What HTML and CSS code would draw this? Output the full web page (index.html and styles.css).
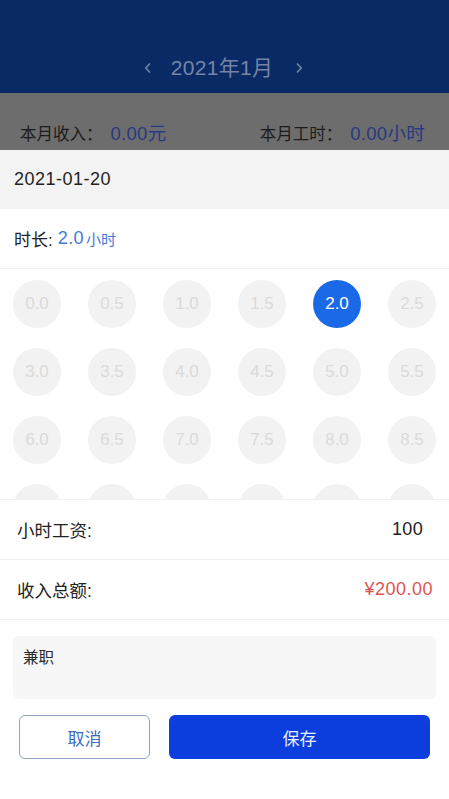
FILE: index.html
```html
<!DOCTYPE html>
<html lang="zh">
<head>
<meta charset="utf-8">
<link rel="stylesheet" href="styles.css">
</head>
<body>
<div class="page">
  <header class="header">
    <div class="month-nav">
      <svg class="chev" width="8" height="12" viewBox="0 0 8 12"><path d="M6 1.5 L1.8 6 L6 10.5" fill="none" stroke="#7585a6" stroke-width="1.6"/></svg>
      <span class="month">2021年1月</span>
      <svg class="chev" width="8" height="12" viewBox="0 0 8 12"><path d="M2 1.5 L6.2 6 L2 10.5" fill="none" stroke="#7585a6" stroke-width="1.6"/></svg>
    </div>
  </header>
  <div class="summary">
    <div class="sum-item"><span class="sum-label">本月收入：</span><span class="sum-val">0.00元</span></div>
    <div class="sum-item"><span class="sum-label">本月工时：</span><span class="sum-val">0.00小时</span></div>
  </div>
  <div class="sheet">
    <div class="date-row">2021-01-20</div>
    <div class="dur-row">时长: <span class="dur-val">2.0</span><span class="dur-unit">小时</span></div>
    <div class="grid-wrap">
      <div class="grid">
        <div class="cell">0.0</div><div class="cell">0.5</div><div class="cell">1.0</div><div class="cell">1.5</div><div class="cell active">2.0</div><div class="cell">2.5</div>
        <div class="cell">3.0</div><div class="cell">3.5</div><div class="cell">4.0</div><div class="cell">4.5</div><div class="cell">5.0</div><div class="cell">5.5</div>
        <div class="cell">6.0</div><div class="cell">6.5</div><div class="cell">7.0</div><div class="cell">7.5</div><div class="cell">8.0</div><div class="cell">8.5</div>
        <div class="cell"></div><div class="cell"></div><div class="cell"></div><div class="cell"></div><div class="cell"></div><div class="cell"></div>
      </div>
    </div>
    <div class="info-row"><span>小时工资:</span><span class="wage">100</span></div>
    <div class="info-row"><span>收入总额:</span><span class="total">¥200.00</span></div>
    <div class="note">兼职</div>
    <div class="actions">
      <button class="btn btn-cancel">取消</button>
      <button class="btn btn-save">保存</button>
    </div>
  </div>
</div>
</body>
</html>
```
FILE: styles.css
```css
* { box-sizing: border-box; }
html, body { margin: 0; padding: 0; }
body {
  width: 449px;
  height: 799px;
  overflow: hidden;
  background: #fff;
  font-family: "Liberation Sans", "Noto Sans CJK SC", sans-serif;
  color: #1e1e1e;
}
.page { display: flex; flex-direction: column; }
.header {
  height: 93px;
  background: #0a2a66;
  display: flex;
  justify-content: center;
  align-items: flex-end;
  padding-bottom: 12px;
  padding-right: 2px;
}
.month-nav {
  display: flex;
  align-items: center;
}
.month {
  font-size: 21px;
  letter-spacing: 0.3px;
  color: #7585a6;
  margin: 0 22px 0 19px;
  line-height: 26px;
}
.summary {
  height: 57px;
  background: #6d6d6d;
  display: flex;
  justify-content: space-between;
  align-items: flex-end;
  padding: 0 24px 3px 20px;
}
.sum-item { font-size: 16.5px; line-height: 26px; }
.sum-label { color: #1c1c1c; margin-right: 8px; }
.sum-val { color: #273a82; font-size: 18.5px; letter-spacing: 0.3px; }
.sheet { display: flex; flex-direction: column; background: #fff; }
.date-row {
  height: 59px;
  background: #f3f3f3;
  display: flex;
  align-items: center;
  padding-left: 14px;
  font-size: 18px;
  letter-spacing: 0.5px;
  color: #222;
}
.dur-row {
  height: 60px;
  border-bottom: 1px solid #f0f0f0;
  display: flex;
  align-items: center;
  padding-left: 14px;
  font-size: 17px;
  color: #222;
}
.dur-val { color: #3f7ad6; margin-left: 5px; font-size: 18px; letter-spacing: 0.4px; }
.dur-unit { color: #3f7ad6; font-size: 15px; margin-left: 2px; }
.grid-wrap {
  height: 231px;
  overflow: hidden;
  padding: 11px 0 0 13px;
  border-bottom: 1px solid #f0f0f0;
}
.grid {
  display: grid;
  grid-template-columns: repeat(6, 48px);
  column-gap: 27px;
  row-gap: 20px;
}
.cell {
  width: 48px;
  height: 48px;
  border-radius: 50%;
  background: #f2f2f2;
  color: #dadada;
  font-size: 17px;
  display: flex;
  align-items: center;
  justify-content: center;
}
.cell.active { background: #1a6ae8; color: #fff; }
.info-row {
  height: 60px;
  border-bottom: 1px solid #f0f0f0;
  display: flex;
  align-items: center;
  justify-content: space-between;
  padding: 0 16px 0 17px;
  font-size: 17.5px;
  color: #222;
}
.wage { margin-right: 10px; font-size: 18px; letter-spacing: 0.3px; }
.total { color: #e05353; font-size: 18px; letter-spacing: 0.5px; }
.note {
  margin: 16px 13px 0 13px;
  height: 63px;
  background: #f7f7f7;
  border-radius: 5px;
  padding: 12px 10px;
  font-size: 15.5px;
  line-height: 20px;
  color: #2a2a2a;
}
.actions {
  display: flex;
  gap: 19px;
  margin: 16px 19px 0 19px;
}
.btn {
  height: 44px;
  border-radius: 6px;
  font-family: "Liberation Sans", "Noto Sans CJK SC", sans-serif;
  font-size: 17px;
  display: flex;
  align-items: center;
  justify-content: center;
}
.btn-cancel {
  width: 131px;
  background: #fff;
  border: 1px solid #8ea5c6;
  color: #3a6cc2;
}
.btn-save {
  flex: 1;
  background: #0b3edc;
  border: none;
  color: #e8ecff;
}
```
